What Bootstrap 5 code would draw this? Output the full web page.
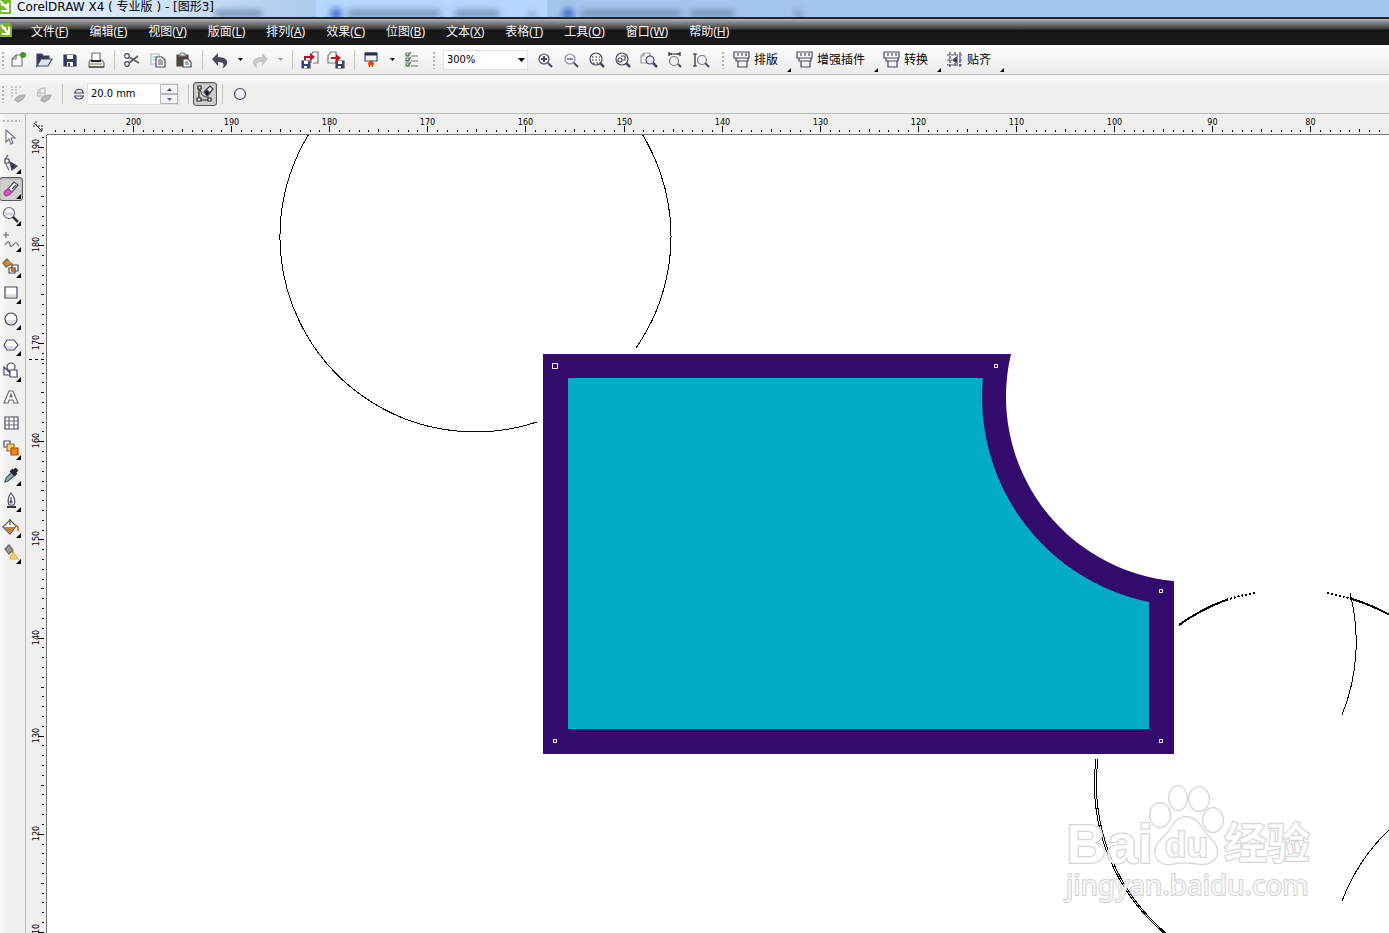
<!DOCTYPE html>
<html lang="zh-CN">
<head>
<meta charset="utf-8">
<meta name="viewport" content="width=device-width, initial-scale=1">
<title>CorelDRAW X4 ( 专业版 ) - [图形3]</title>
<link href="https://cdn.jsdelivr.net/npm/bootstrap@5.3.0/dist/css/bootstrap.min.css" rel="stylesheet">
<style>
  :root { --ui: "Noto Sans", "Noto Sans CJK SC", sans-serif; --line: #b9bdb9; }
  body { font: 12px/16px var(--ui); color: #000; background: #efefee; }
  button, input, select { font: inherit; color: inherit; }
  svg { display: block; }
  .ico { width: 18px; height: 18px; fill: none; stroke: #474a60; stroke-width: 1.2; flex: none; overflow: visible; }
  .caption-bar { height: 17px; background: linear-gradient(90deg, #eef6fd 0, #c6dcf3 210px, #abcaee 316px, #b5d6fd 316px, #b5d6fd 547px, #a4c5eb 547px, #a4c5eb); }
  .caption-bar h1 { font: 12px/14px "DejaVu Sans", "Noto Sans CJK SC", sans-serif; z-index: 1; }
  .caption-bar .ghost { left: 0; top: 0; }
  .menu-strip { height: 28px; border-top: 2px solid #20262c; background: linear-gradient(#b8b8b8 0, #8a8a8a 3px, #3d3b39 10px, #171717 11px, #191919); padding-left: 21px; }
  .menu-strip a { color: #f4f4f4; text-decoration: none; padding: 5px 11px 0 10px; line-height: 16px; }
  .menu-strip .doc { margin-left: -21px; width: 21px; }
  .tool-strip { height: 30px; background: linear-gradient(#fdfdfd, #ededed 26px); border-bottom: 1px solid var(--line); }
  .prop-strip { height: 39px; background: linear-gradient(#fbfbfb, #efefee 12px); border-bottom: 1px solid var(--line); }
  .tb { width: 26px; height: 26px; padding: 0; border: 1px solid transparent; border-radius: 3px; background: none; display: flex; align-items: center; justify-content: center; flex: none; position: relative; }
  .tb:hover { border-color: #999; }
  .drop { width: 14px; }
  .on { border-color: #55585c; background: #cfcfcd; box-shadow: inset 0 1px 2px #8888; }
  .prop-strip .on { width: 24px; height: 24px; }
  .prop-strip label.drop { width: 16px; }
  .divide { width: 10px; height: 20px; background: linear-gradient(#c4c4c4, #c4c4c4) center / 1px 100% no-repeat; flex: none; }
  .grip { width: 5px; height: 18px; background: radial-gradient(#b5b5b5 1px, transparent 1px) center top / 4px 4px repeat-y; flex: none; }
  .grip.wide { width: 18px; }
  .combo { width: 85px; height: 20px; border: 1px solid #e0e0e0; background: #fff; padding: 0 3px; appearance: none; border-radius: 0; font: 11px/16px "DejaVu Sans Condensed", "Noto Sans", sans-serif; }
  .combo-box { margin-right: 4px; position: relative; }
  .combo-box svg { position: absolute; right: 3px; top: 8px; pointer-events: none; }
  .flyout { border: 0; background: none; height: 28px; padding: 0 17px 0 2px; gap: 4px; display: flex; align-items: center; white-space: nowrap; position: relative; }
  .flyout .ico { width: 16px; }
  .flyout::after, .fly::after { content: ""; position: absolute; right: 4px; bottom: 2px; border-style: solid; border-width: 0 0 4px 4px; border-color: transparent transparent #000; }
  .fly::after { right: 1px; bottom: 1px; border-width: 0 0 5px 5px; }
  .nib { width: 92px; height: 22px; background: #fff; border: 1px solid #e2e2e2; }
  .nib input { width: 72px; border: 0; padding: 0 3px; background: none; outline: 0; font: 11px/16px "DejaVu Sans Condensed", sans-serif; }
  .nib button { width: 18px; height: 10px; padding: 0; border: 1px solid #b3b7c4; background: #f3f3f5; display: flex; align-items: center; justify-content: center; }
  .toolbox { width: 26px; border-right: 1px solid var(--line); background: linear-gradient(90deg, #fafafa, #efefee 8px); padding-top: 3px; flex: none; }
  .toolbox .tb { width: 24px; margin-left: -1px; }
  .toolbox .on { height: 24px; margin-top: 1px; margin-bottom: 1px; }
  .toolbox .hgrip { width: 18px; height: 7px; margin-left: 2px; background: radial-gradient(#b5b5b5 1px, transparent 1px) left center / 4px 4px repeat-x; }
  .desk { display: grid; grid-template: 21px minmax(0, 1fr) / 21px minmax(0, 1fr); min-width: 0; }
  .desk svg { width: 100%; height: 100%; overflow: hidden; min-height: 0; }
  .rule-h { border-bottom: 1px solid #777; }
  .rule-v { border-right: 1px solid #777; min-height: 0; }
  .rule-h, .rule-v { font: 9px/10px "DejaVu Sans Condensed", sans-serif; }
  .page-area { background: #fff; min-height: 0; }
  .brand { fill: #fff; fill-opacity: .75; stroke: #d4d4d4; stroke-width: 2; paint-order: stroke; stroke-linejoin: round; }
</style>
</head>
<body class="vh-100 d-flex flex-column overflow-hidden">
<header>
  <div class="caption-bar d-flex position-relative">
    <svg class="ghost position-absolute" width="100%" height="17" aria-hidden="true"><defs><filter id="soft" x="-20%" y="-100%" width="140%" height="300%"><feGaussianBlur stdDeviation="3"/></filter></defs>
      <g filter="url(#soft)" fill="#7592b6"><path d="M215 10h47v7h-47zM348 10h92v7h-92zM455 10h44v7h-44zM529 12h6v5h-6zM581 10h100v7H581zM690 10h44v7h-44zM795 10h6v7h-6z"/><circle cx="336" cy="14" r="6" fill="#4a70cc"/><circle cx="568" cy="14" r="6" fill="#4a70cc"/></g></svg>
    <svg width="17" height="15" class="position-relative"><path d="M0 0h11v14H0z" fill="#79b82c"/><path d="M0 1l9 9M8 3v8H1M1 5h6" fill="none" stroke="#fff" stroke-width="2"/></svg>
    <h1 class="m-0 text-nowrap">CorelDRAW X4 ( 专业版 ) - [图形3]</h1>
  </div>
  <nav class="menu-strip d-flex text-nowrap" aria-label="菜单">
    <svg class="doc" height="24"><path d="M0 4h9l3 3v11H0z" fill="#79b82c"/><path d="M1 6l8 9M9 8v7H2M2 9h4" fill="none" stroke="#fff" stroke-width="2"/></svg>
    <a href="#">文件(<u>F</u>)</a><a href="#">编辑(<u>E</u>)</a><a href="#">视图(<u>V</u>)</a><a href="#">版面(<u>L</u>)</a><a href="#">排列(<u>A</u>)</a><a href="#">效果(<u>C</u>)</a><a href="#">位图(<u>B</u>)</a><a href="#">文本(<u>X</u>)</a><a href="#">表格(<u>T</u>)</a><a href="#">工具(<u>O</u>)</a><a href="#">窗口(<u>W</u>)</a><a href="#">帮助(<u>H</u>)</a>
  </nav>
  <div class="tool-strip d-flex align-items-center" role="toolbar" aria-label="标准">
    <span class="grip"></span>
    <button class="tb" aria-label="新建"><svg class="ico"><path d="M3 15V8l4-4h6v11z" fill="#fafafa" stroke="#777"/><path d="M3 8h4V4" stroke="#777"/><circle cx="14" cy="4" r="3" fill="#3a9b25" stroke="none"/></svg></button>
    <button class="tb" aria-label="打开"><svg class="ico"><path d="M2 15V3h5l1 2h6v3H6z" fill="#2f3757"/><path d="M2 15L6 8h11l-4 7z" fill="#dde5ee"/></svg></button>
    <button class="tb" aria-label="保存"><svg class="ico"><path d="M3 4h11l1 1v10H3z" fill="#35406b" stroke="#2b3356"/><path d="M6 4h6v4H6zM6 11h6v4H6z" fill="#fff" stroke="none"/><path d="M7 12h2v3H7z" fill="#35406b" stroke="none"/></svg></button>
    <button class="tb" aria-label="打印"><svg class="ico"><path d="M3 9h12l2 3v4H2v-4z" fill="#e9e9e9" stroke="#777"/><path d="M5 10V2h8v8z" fill="#fff" stroke="#777"/><path d="M4 10h10" stroke="#222" stroke-width="2"/><path d="M3 13h12" stroke="#87a56c"/><path d="M2 16h15" stroke="#333"/></svg></button>
    <span class="divide"></span>
    <button class="tb" aria-label="剪切"><svg class="ico"><circle cx="4" cy="5" r="2.3"/><circle cx="4" cy="13" r="2.3"/><path d="M6 6l10 6M6 12l9-7" stroke="#666" stroke-width="2"/></svg></button>
    <button class="tb" aria-label="复制"><svg class="ico"><path d="M2 3h8v10H2z" fill="#f4fafa" stroke="#a9bfc1"/><path d="M3 6h5M3 9h5" stroke="#9cc"/><path d="M7 6h6l3 3v7H7z" fill="#fff"/><path d="M9 9h4M9 11h5M9 13h5"/></svg></button>
    <button class="tb" aria-label="粘贴"><svg class="ico"><path d="M2 4h11v11H2z" fill="#51463e" stroke="#51463e"/><path d="M4 5l2-3h3l2 3z" fill="#eee9c9" stroke="#777"/><path d="M8 8h5l3 3v5H8z" fill="#fff"/><path d="M10 11h3M10 13h4"/></svg></button>
    <span class="divide"></span>
    <button class="tb" aria-label="撤消"><svg class="ico"><path d="M1 8l6-6v4c7 0 10 3 9 7-1 2-3 4-5 4 3-3 2-6-4-6v4z" fill="#474a5c" stroke="none"/></svg></button>
    <button class="tb drop" aria-label="撤消列表"><svg width="5" height="3"><path d="M0 0h5L2.500 3z"/></svg></button>
    <button class="tb" aria-label="重做"><svg class="ico"><path d="M17 8l-6-6v4c-7 0-10 3-9 7 1 2 3 4 5 4-3-3-2-6 4-6v4z" fill="#c6c6c6" stroke="none"/></svg></button>
    <button class="tb drop" aria-label="重做列表"><svg width="5" height="3"><path d="M0 0h5L2.500 3z" fill="#999"/></svg></button>
    <span class="divide"></span>
    <button class="tb" aria-label="导入"><svg class="ico"><path d="M10 12V4l2-3h5v11h-5" fill="#fafafa" stroke="#777"/><path d="M1 10h8v7H1z" fill="#35406b"/><path d="M3 10h4v3H3zM3 15h3v2H3z" fill="#fff" stroke="none"/><path d="M4 9V6h6" stroke="#b31525" stroke-width="2"/><path d="M9 2l5 4-5 4z" fill="#b31525" stroke="none"/></svg></button>
    <button class="tb" aria-label="导出"><svg class="ico"><path d="M1 12V5l3-4h5v11z" fill="#fafafa" stroke="#777"/><path d="M9 10h8v7H9z" fill="#35406b"/><path d="M11 10h4v3h-4zM11 15h3v2h-3z" fill="#fff" stroke="none"/><path d="M4 7h6" stroke="#b31525" stroke-width="2"/><path d="M9 3l5 4-5 4z" fill="#b31525" stroke="none"/></svg></button>
    <span class="divide"></span>
    <button class="tb" aria-label="应用程序启动器"><svg class="ico"><path d="M2 2h12v8H2z" fill="#f2f2f5"/><path d="M2 3h12" stroke="#292e4b" stroke-width="3"/><path d="M8 9l3 3-1 4H6l-1-4z" fill="#e83b16" stroke="none"/><path d="M8 14v2" stroke="#ffb52a" stroke-width="2"/></svg></button>
    <button class="tb drop" aria-label="启动器列表"><svg width="5" height="3"><path d="M0 0h5L2.500 3z"/></svg></button>
    <button class="tb" aria-label="选项"><svg class="ico"><path d="M3 2h3v3H3zM3 7h3v3H3zM3 12h3v3H3zM8 5h7M8 10h7M8 15h7" stroke="#777"/><path d="M3 4l2 1 3-4M3 9l2 1 3-4M3 14l2 1 3-4" stroke="#477a43"/></svg></button>
    <span class="grip wide"></span>
    <div class="combo-box"><select class="combo" aria-label="缩放级别"><option>300%</option></select><svg width="7" height="4"><path d="M0 0h7L3.500 4z"/></svg></div>
    <button class="tb" aria-label="放大"><svg class="ico"><circle cx="8" cy="8" r="5" fill="#f4f4fa"/><path d="M8 5v6M5 8h6" stroke-width="2"/><path d="M12 12l4 4" stroke-width="2"/></svg></button>
    <button class="tb" aria-label="缩小"><svg class="ico"><circle cx="8" cy="8" r="5" fill="#f4f4fa" stroke="#888a99"/><path d="M5 8h6"/><path d="M12 12l4 4" stroke-width="2"/></svg></button>
    <button class="tb" aria-label="缩放选定范围"><svg class="ico"><circle cx="8" cy="8" r="6" fill="#f8f8fa"/><path d="M4 6h8M4 9h8M5 12h6" stroke="#222" stroke-dasharray="1.500 2"/><path d="M12 12l4 4" stroke-width="2.500"/></svg></button>
    <button class="tb" aria-label="缩放全部对象"><svg class="ico"><circle cx="8" cy="8" r="6" fill="#f8f8fa"/><circle cx="6" cy="9" r="2"/><path d="M7 5h4v4H9"/><path d="M12 12l4 4" stroke-width="2.500"/></svg></button>
    <button class="tb" aria-label="缩放页面"><svg class="ico"><path d="M1 12V5l3-3h6v10z" fill="#f8f8fa" stroke="#999baa"/><path d="M1 5h3V2" stroke="#999baa"/><circle cx="10" cy="9" r="4" fill="#e6e7ef"/><path d="M13 12l4 4" stroke-width="2.500"/></svg></button>
    <button class="tb" aria-label="缩放页宽"><svg class="ico"><path d="M3 1v4M14 1v4M3 3h11M5 2v2M12 2v2" stroke="#222"/><circle cx="8" cy="10" r="4.500" fill="#f1f1f5" stroke="#777989"/><path d="M12 13l3 3" stroke-width="2"/></svg></button>
    <button class="tb" aria-label="缩放页高"><svg class="ico"><path d="M1 3h4M1 15h4M3 3v12" stroke="#222"/><circle cx="10" cy="9" r="4.500" fill="#f1f1f5" stroke="#777989"/><path d="M13 12l4 4" stroke-width="2"/></svg></button>
    <span class="grip wide"></span>
    <button class="flyout"><svg class="ico"><path d="M0 1h15v6H0zM4 2v3M8 2v3M12 2v3M2 7h12v3H2zM4 10h9v6H4z"/></svg>排版</button>
    <button class="flyout"><svg class="ico"><path d="M0 1h15v6H0zM4 2v3M8 2v3M12 2v3M2 7h12v3H2zM4 10h9v6H4z"/></svg>增强插件</button>
    <button class="flyout"><svg class="ico"><path d="M0 1h15v6H0zM4 2v3M8 2v3M12 2v3M2 7h12v3H2zM4 10h9v6H4z"/></svg>转换</button>
    <button class="flyout"><svg class="ico"><path d="M3 1v15M8 1v4M8 12v4M13 1v15M0 4h16M0 9h5M12 9h4M0 14h16" stroke-dasharray="3 1"/><path d="M6 9l4-3v6z" fill="#333"/></svg>贴齐</button>
  </div>
  <div class="prop-strip d-flex align-items-center" role="toolbar" aria-label="属性栏">
    <span class="grip"></span>
    <button class="tb" disabled aria-label="曲线"><svg class="ico"><path d="M2 2h10M2 5h8M2 8h6M2 11h4" stroke="#aaa" stroke-dasharray="2 2"/><path d="M6 15c1-3 4-5 10-5l-2 4-5 3z" fill="#bbb" stroke="#aaa"/></svg></button>
    <button class="tb" disabled aria-label="形状"><svg class="ico"><path d="M2 10c1-6 3-7 8-7v8H3z" stroke="#bbb"/><path d="M5 4v7M2 8h8" stroke="#bbb"/><path d="M6 15c1-3 4-5 10-5l-2 4-5 3z" fill="#bbb" stroke="#aaa"/></svg></button>
    <span class="divide"></span>
    <label class="tb drop ms-1" for="nib"><svg class="ico" style="width:12px" aria-label="橡皮擦厚度"><path d="M2 8c0-5 8-5 8 0M2 11c0 4 8 4 8 0M1 8h10M1 11h10"/></svg></label>
    <div class="nib d-flex align-items-center"><input id="nib" type="text" value="20.0 mm"><div><button aria-label="增加"><svg width="5" height="3"><path d="M0 3h5L2.500 0z" fill="#474a60"/></svg></button><button aria-label="减少"><svg width="5" height="3"><path d="M0 0h5L2.500 3z" fill="#5b65b0"/></svg></button></div></div>
    <span class="divide ms-1"></span>
    <button class="tb on" aria-label="自动减少节点"><svg class="ico"><path d="M3 3v10M3 15h9" stroke="#222"/><path d="M2 1h3v3H2zM12 13h3v3h-3zM1 13h4v3H1z" fill="#fff" stroke="#222"/><path d="M4 4c1 6 4 9 9 8" stroke="#555"/><path d="M9 6l5-5 3 3-5 6z" fill="#fff" stroke="#333"/><path d="M8 7l3-2 3 3-3 3z" fill="#111"/></svg></button>
    <span class="divide"></span>
    <button class="tb" aria-label="圆形/方形"><svg class="ico"><circle cx="9" cy="9" r="5.500"/></svg></button>
  </div>
</header>
<main class="d-flex flex-grow-1 overflow-hidden">
  <aside class="toolbox" role="toolbar" aria-label="工具箱">
    <div class="hgrip"></div>
    <button class="tb" aria-label="挑选"><svg class="ico"><path d="M4 2v12l3-3 2 5 2-1-2-5h4z" fill="#fff" stroke="#777989"/></svg></button>
    <button class="tb fly" aria-label="形状"><svg class="ico"><path d="M6 1c-5 6-2 10 1 15" stroke="#777"/><path d="M3 5h4v4H3z" fill="#fff"/><path d="M8 8l7 4-5 4z" fill="#34384b"/></svg></button>
    <button class="tb fly on" aria-label="橡皮擦"><svg class="ico"><path d="M6 9l6-7 4 3-6 7z" fill="#fff"/><path d="M3 11l3-2 4 3-3 3-3 1-2-2z" fill="#d955bd" stroke="#a34792"/><path d="M10 9l4-4"/></svg></button>
    <button class="tb fly" aria-label="缩放"><svg class="ico"><circle cx="7" cy="7" r="5.500" fill="#f8f8fc" stroke="#6b6d7b"/><path d="M3 8h8" stroke="#d3d4e0" stroke-width="3"/><path d="M11 11l5 5" stroke="#333" stroke-width="2.500"/></svg></button>
    <button class="tb fly" aria-label="手绘"><svg class="ico"><path d="M4 0v6M1 3h6M3 13c3-6 5-2 5 0s2 2 4-1 3 0 5 2" stroke="#6b6d7b"/></svg></button>
    <button class="tb fly" aria-label="智能填充"><svg class="ico"><path d="M1 5l4-4 4 5-5 3z" fill="#d68c29" stroke="#666"/><path d="M6 3l4 3v4" stroke="#d68c29" stroke-width="2"/><path d="M10 7h6v6h-6zM7 10h6v5H7z" fill="#fff"/><path d="M10 10h3v3h-3z" fill="#e6861d" stroke="#b36318"/></svg></button>
    <button class="tb fly" aria-label="矩形"><svg class="ico"><path d="M3 3h12v11H3z" fill="#fff"/><path d="M4 10h10v3H4z" fill="#dedee7" stroke="none"/></svg></button>
    <button class="tb fly" aria-label="椭圆形"><svg class="ico"><circle cx="9" cy="9" r="6" fill="#fff"/><path d="M4 10h10q-5 8-10 0z" fill="#dedee7" stroke="none"/></svg></button>
    <button class="tb fly" aria-label="多边形"><svg class="ico"><path d="M2 9l3-5h7l4 5-4 5H5z" fill="#fff"/><path d="M4 10h10l-3 3H6z" fill="#dedee7" stroke="none"/></svg></button>
    <button class="tb fly" aria-label="基本形状"><svg class="ico"><path d="M2 5v8h8z" fill="#f7f7fa"/><circle cx="9" cy="5" r="4" fill="#fff"/><path d="M8 8h7v7H8z" fill="#fff"/></svg></button>
    <button class="tb" aria-label="文本"><svg class="ico"><path d="M2 15L7 3h4l5 12h-4l-1-3H7l-1 3zM8 9h2L9 6z" fill="#fff" stroke="#6b6d7b"/></svg></button>
    <button class="tb" aria-label="表格"><svg class="ico"><path d="M3 3h13v12H3z" fill="#fff"/><path d="M7 3v12M12 3v12M3 7h13M3 11h13" stroke="#6b6d7b"/></svg></button>
    <button class="tb fly" aria-label="交互式调和"><svg class="ico"><path d="M2 1h6v6H2z" fill="#fff"/><path d="M5 4h7v7H5z" fill="#ffcf60" stroke="#8b6a35"/><path d="M9 8h7v7H9z" fill="#f48019" stroke="#a8510e"/></svg></button>
    <button class="tb fly" aria-label="滴管"><svg class="ico"><path d="M3 16l1-4 6-6 3 3-7 6z" fill="#8fb5aa" stroke="#3f5552"/><path d="M9 4l5 5M12 6l3-3" stroke="#22242f" stroke-width="4"/></svg></button>
    <button class="tb fly" aria-label="轮廓"><svg class="ico"><path d="M9 1c-3 4-4 7-2 12h5c2-5 0-8-3-12zM9 5v5" fill="#fff"/><circle cx="9" cy="10" r="1"/><path d="M5 15h9" stroke="#333" stroke-width="2"/></svg></button>
    <button class="tb fly" aria-label="填充"><svg class="ico"><path d="M1 9l7-7 6 6-6 8z" fill="#fff" stroke="#555"/><path d="M2 9h11l-5 6z" fill="#cf8127" stroke="none"/><path d="M8 1v6" stroke="#555"/><path d="M13 7q4 1 3 6" stroke="#cf8127" stroke-width="2"/></svg></button>
    <button class="tb fly" aria-label="交互式填充"><svg class="ico"><path d="M3 5l4-4 4 5-4 4z" fill="#a09792" stroke="#666"/><path d="M9 4l2 5" stroke="#a77740" stroke-width="2"/><path d="M8 15l1-4 3-2 4 6z" fill="#f6cf6b" stroke="#e0b760"/></svg></button>
  </aside>
  <section class="desk flex-grow-1" aria-label="绘图窗口">
    <svg viewBox="0 0 21 21" fill="none" stroke="#222" aria-hidden="true"><path d="M7 12h3M12 12h5M10 7v4" stroke-dasharray="2 1"/><path d="M8 9l8 8M16 14v3h-3"/></svg>
    <div class="rule-h"><svg id="ruleH" shape-rendering="crispEdges"></svg></div>
    <div class="rule-v"><svg id="ruleV" shape-rendering="crispEdges"></svg></div>
    <div class="page-area">
      <svg role="img" aria-label="图形3">
        <g transform="translate(-47 -135)">
          <g fill="none" stroke="#000" shape-rendering="crispEdges">
            <path d="M636 348A195.500 195.500 0 1 0 537 422"/>
            <path d="M1350 593A195 195 0 0 1 1342 715M1342 901A196 196 0 0 1 1400 820"/>
            <path d="M1096 759A196 196 0 0 0 1170 938M1098 759A196 196 0 0 0 1172 938"/>
            <path d="M1179 625A196 196 0 0 1 1226 600M1352 599A196 196 0 0 1 1400 621" stroke-width="2"/>
            <path d="M1226 600A196 196 0 0 1 1256 593M1327 593A196 196 0 0 1 1352 599" stroke-width="2" stroke-dasharray="2 2"/>
          </g>
          <path d="M543 354H1011A185 185 0 0 0 1174 581V754H543z" fill="#330b6e"/>
          <path d="M568 378H983A209 209 0 0 0 1149 602V729H568z" fill="#02acc6"/>
          <path d="M552.500 363.500h5v5h-5zM994.500 364.500h3v3h-3zM1159.500 589.500h3v3h-3zM1159.500 739.500h3v3h-3zM553.500 739.500h3v3h-3z" fill="#330b6e" stroke="#fff"/>
          <g class="brand">
            <text x="1066" y="863" font-family="Liberation Sans" font-weight="700" font-size="56">Bai</text>
            <ellipse cx="1178" cy="798" rx="9" ry="12"/><ellipse cx="1199" cy="799" rx="10" ry="12"/><ellipse cx="1160" cy="815" rx="10" ry="12"/><ellipse cx="1213" cy="820" rx="10" ry="12"/>
            <path d="M1186 817c-12 0-14 13-24 22-13 12-6 27 9 25 10-2 20-2 29 0 16 2 23-13 11-25-10-9-12-22-25-22z"/>
            <text x="1165" y="857" font-family="Liberation Sans" font-weight="700" font-size="35">du</text>
            <text x="1224" y="859" font-family="Noto Sans CJK SC" font-weight="700" font-size="43">经验</text>
            <text x="1066" y="895" font-family="Noto Sans" font-size="28">jingyan.baidu.com</text>
          </g>
        </g>
      </svg>
    </div>
  </section>
</main>
<script>
  // Rulers: one label per 10 mm, one tick per millimetre
  const step = 98.1;
  function rule(svg, first, origin, count, vertical) {
    let d = '', labels = '';
    for (let i = -9; i <= count * 10 + 9; i++) {
      const p = Math.round(origin + i * step / 10) + 0.5;
      const len = i % 10 === 0 ? 6 : i % 5 === 0 ? 3 : 2;
      d += vertical ? `M${18 - len} ${p}h${len}` : `M${p} ${18 - len}v${len}`;
      if (i % 10 === 0 && i >= 0) {
        const n = first - i;
        labels += vertical
          ? `<text transform="translate(13 ${p - 1}) rotate(-90)" text-anchor="middle">${n}</text>`
          : `<text x="${p}" y="11" text-anchor="middle">${n}</text>`;
      }
    }
    svg.innerHTML = `<path d="${d}" stroke="#000" fill="none"/>${labels}`;
  }
  rule(document.getElementById('ruleH'), 200, 86, 12, false);
  rule(document.getElementById('ruleV'), 190, 12, 8, true);
  document.getElementById('ruleV').insertAdjacentHTML('beforeend', '<path d="M3 224.500h16" stroke="#000" stroke-dasharray="3 3"/>');
</script>
<script src="https://cdn.jsdelivr.net/npm/bootstrap@5.3.0/dist/js/bootstrap.bundle.min.js"></script>
</body>
</html>
